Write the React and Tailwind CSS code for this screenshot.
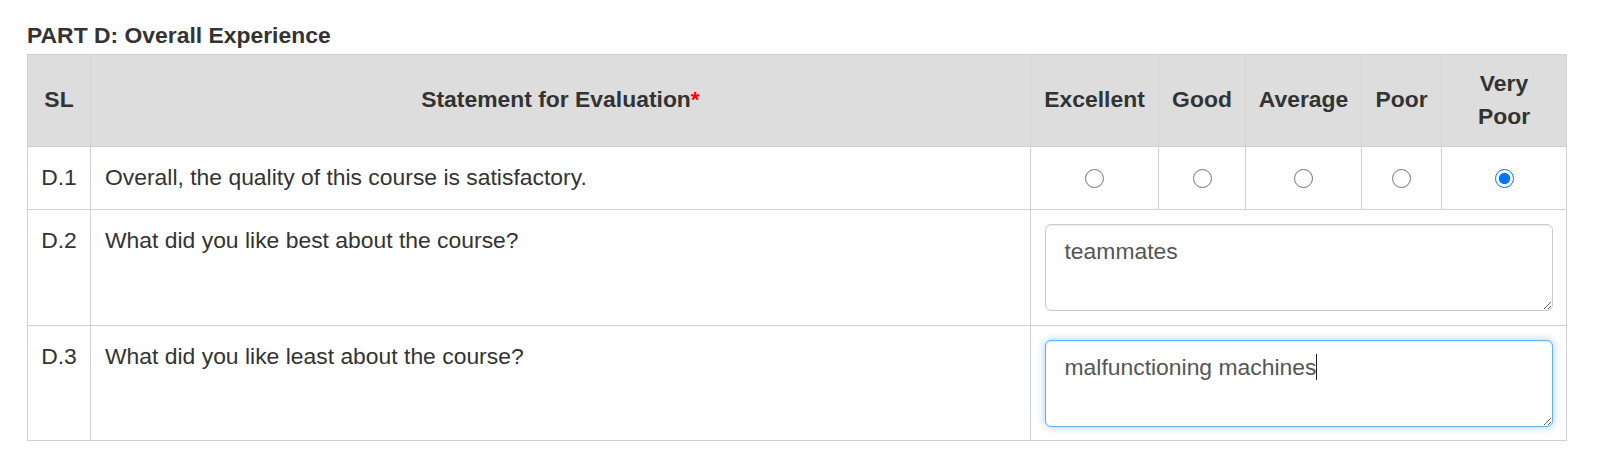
import { useState } from 'react';

const ratings = ['Excellent', 'Good', 'Average', 'Poor', 'Very Poor'];

const AnswerBox = ({ value, focused = false, onChange }) => (
  <div className="relative">
    <textarea
      value={value}
      onChange={(e) => onChange(e.target.value)}
      className={`block w-full h-[87px] rounded-[6px] border px-[19px] py-[10px] text-[22.9px] leading-[33.6px] text-[#555555] bg-white outline-none resize-y ${
        focused
          ? 'border-[#66afe9] shadow-[inset_0_1px_1px_rgba(0,0,0,0.075),0_0_8px_rgba(102,175,233,0.6)]'
          : 'border-[#cccccc] shadow-[inset_0_1px_1px_rgba(0,0,0,0.075)]'
      }`}
    />
    {/* caret shown after the typed text */}
    {focused && (
      <div className="pointer-events-none absolute left-[20px] top-[11px] text-[22.9px] leading-[33.6px] text-transparent whitespace-pre">
        {value}
        <span className="inline-block w-px h-[26px] align-[-5px] bg-[#222222]" />
      </div>
    )}
  </div>
);

const App = () => {
  const [rating, setRating] = useState('Very Poor');
  const [best, setBest] = useState('teammates');
  const [least, setLeast] = useState('malfunctioning machines');

  const cell = 'border border-[#d2d2d2]';

  return (
    <div
      className="bg-white min-h-[458px] pt-[19px] pl-[27px] text-[#333333] text-[22.9px] leading-[33.6px]"
      style={{ fontFamily: '"Liberation Sans", Arial, sans-serif' }}
    >
      <h3 className="font-bold mb-[1px]">PART D: Overall Experience</h3>

      <table className="table-fixed border-collapse w-[1539px]">
        <colgroup>
          <col className="w-[63px]" />
          <col className="w-[940px]" />
          <col className="w-[128px]" />
          <col className="w-[87px]" />
          <col className="w-[116px]" />
          <col className="w-[80px]" />
          <col className="w-[125px]" />
        </colgroup>
        <thead>
          <tr className="bg-[#dddddd]">
            <th className={`${cell} py-[12px] text-center align-middle`}>SL</th>
            <th className={`${cell} py-[12px] text-center align-middle`}>
              Statement for Evaluation<span className="text-[#ff0000]">*</span>
            </th>
            {ratings.map((r) => (
              <th key={r} className={`${cell} px-[8px] py-[12px] text-center align-middle`}>
                {r === 'Very Poor' ? (
                  <>
                    Very
                    <br />
                    Poor
                  </>
                ) : (
                  r
                )}
              </th>
            ))}
          </tr>
        </thead>
        <tbody>
          <tr>
            <td className={`${cell} py-[14.5px] text-center align-middle`}>D.1</td>
            <td className={`${cell} px-[14px] py-[14.5px] align-middle`}>
              Overall, the quality of this course is satisfactory.
            </td>
            {ratings.map((r) => (
              <td key={r} className={`${cell} py-[14.5px] align-middle`}>
                <input
                  type="radio"
                  name="d1"
                  checked={rating === r}
                  onChange={() => setRating(r)}
                  className="block mx-auto m-0 w-[19px] h-[19px]"
                />
              </td>
            ))}
          </tr>
          <tr>
            <td className={`${cell} pt-[14px] text-center align-top`}>D.2</td>
            <td className={`${cell} px-[14px] pt-[14px] align-top`}>What did you like best about the course?</td>
            <td colSpan={5} className={`${cell} px-[13.5px] py-[14px] align-top`}>
              <AnswerBox value={best} onChange={setBest} />
            </td>
          </tr>
          <tr>
            <td className={`${cell} pt-[14px] text-center align-top`}>D.3</td>
            <td className={`${cell} px-[14px] pt-[14px] align-top`}>What did you like least about the course?</td>
            <td colSpan={5} className={`${cell} px-[13.5px] py-[13.5px] align-top`}>
              <AnswerBox value={least} onChange={setLeast} focused />
            </td>
          </tr>
        </tbody>
      </table>
    </div>
  );
};

export default App;
